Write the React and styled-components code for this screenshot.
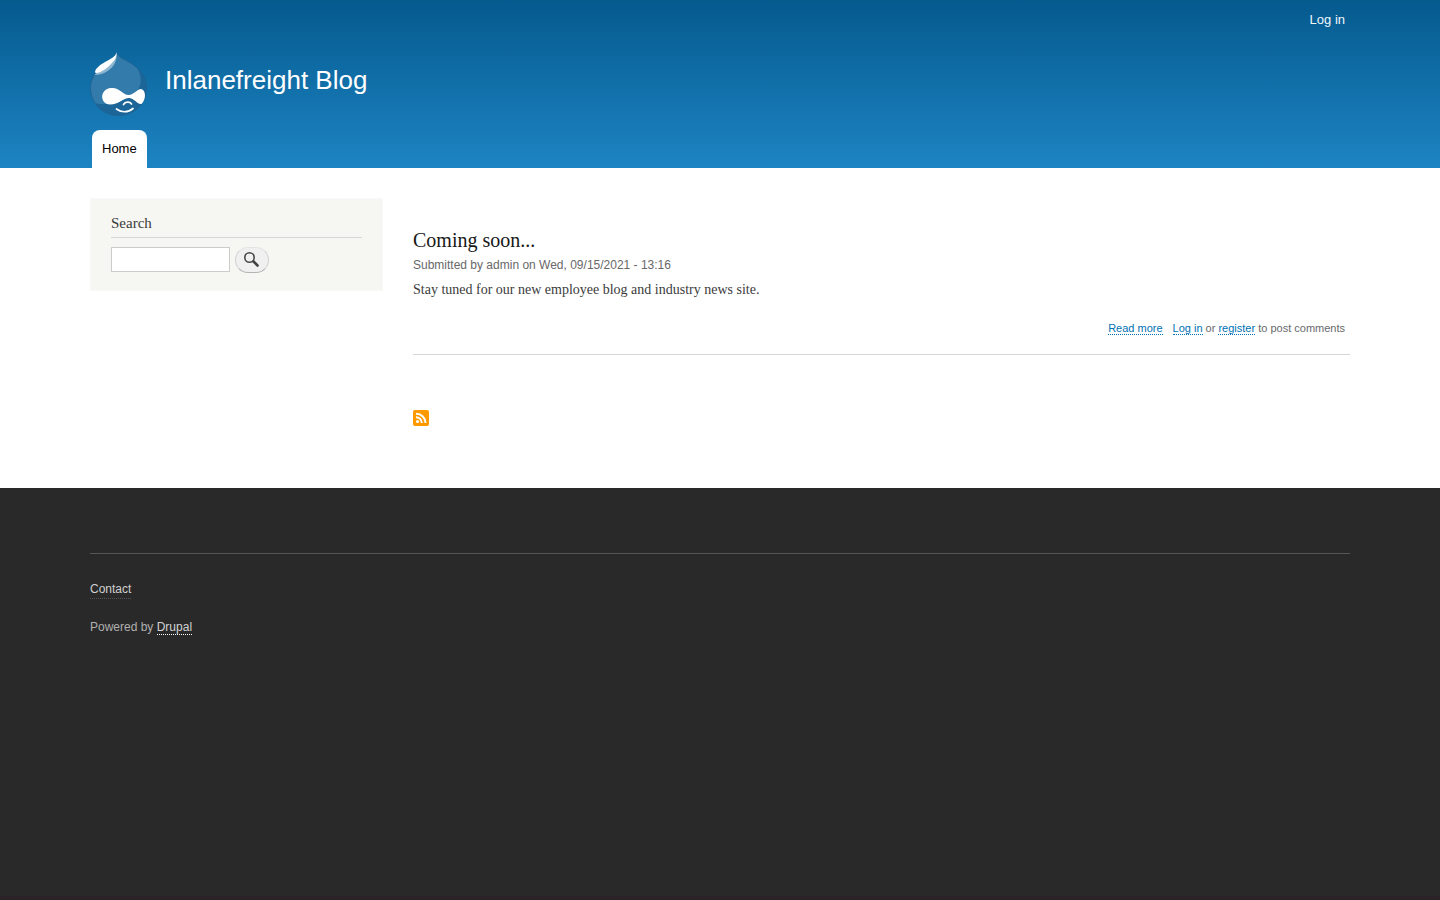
import React from "react";
import styled, { createGlobalStyle } from "styled-components";

const sans = `"Liberation Sans", Arial, Helvetica, sans-serif`;
const serif = `"Liberation Serif", Georgia, "Times New Roman", serif`;

const GlobalStyle = createGlobalStyle`
  *, *::before, *::after { box-sizing: border-box; }
  body { margin: 0; background: #292929; font-family: ${serif}; }
  h1, h2, p, ul { margin: 0; padding: 0; font-weight: normal; }
  a { text-decoration: none; }
`;

const Page = styled.div`
  display: flex;
  flex-direction: column;
  min-height: 100vh;
  border-bottom: 4px solid #2b2328;
`;

const Header = styled.header`
  padding: 0 90px;
  background: linear-gradient(to bottom, #055a8e 0%, #1d84c3 100%);
  font-family: ${sans};
`;

const UserMenu = styled.nav`
  display: flex;
  justify-content: flex-end;
  height: 52px;
  padding: 10px 5px 0;
  font-size: 13px;
  line-height: 20px;

  a { color: #f0f6fa; }
`;

const Branding = styled.div`
  display: flex;
  gap: 18px;
  height: 78px;
`;

const Logo = styled.svg`
  display: block;
  width: 57px;
  height: 65px;
`;

const SiteName = styled.h1`
  padding-top: 13px;
  font-size: 26px;
  line-height: 30px;

  a { color: #fffeff; }
`;

const MainMenu = styled.nav`
  display: flex;
  padding-left: 2px;
`;

const Tab = styled.a`
  height: 38px;
  padding: 0 10px;
  border-radius: 8px 8px 0 0;
  background: #fff;
  color: #000;
  font-size: 13px;
  line-height: 38px;
`;

const Main = styled.main`
  display: grid;
  grid-template-columns: 293px minmax(0, 1fr);
  align-items: start;
  gap: 30px;
  min-height: 320px;
  padding: 30px 90px 62px;
  background: #fff;
`;

const SearchBlock = styled.section`
  padding: 15px 20px 17px;
  border: 1px solid #f9f9f9;
  background: #f6f6f2;
`;

const BlockTitle = styled.h2`
  padding-bottom: 4px;
  border-bottom: 1px solid #d6d6d6;
  color: #3b3b3b;
  font-size: 15px;
  line-height: 19px;
`;

const SearchForm = styled.form`
  display: flex;
  align-items: flex-start;
  gap: 5px;
  padding-top: 9px;
`;

const SearchInput = styled.input`
  width: 119px;
  height: 25px;
  margin: 0;
  padding: 2px 4px;
  border: 1px solid #ccc;
  border-radius: 0;
  background: #fff;
  font: 13px ${sans};
`;

const SearchButton = styled.button`
  display: flex;
  align-items: center;
  justify-content: center;
  width: 34px;
  height: 26px;
  margin: 0;
  padding: 0;
  border: 1px solid #e4e4e4;
  border-right-color: #d2d2d2;
  border-bottom-color: #b4b4b4;
  border-left-color: #d2d2d2;
  border-radius: 13px;
  background: #f0f0f0;
  cursor: pointer;
`;

const Content = styled.div`
  padding-top: 29px;
`;

const Article = styled.article`
  padding-bottom: 18px;
  border-bottom: 1px solid #d3d7d9;
`;

const ArticleTitle = styled.h2`
  font-size: 20px;
  line-height: 26px;

  a { color: #181818; }
`;

const Submitted = styled.p`
  padding-top: 4px;
  color: #686868;
  font: 12px/16px ${sans};
`;

const Body = styled.p`
  padding-top: 6px;
  color: #3b3b3b;
  font-size: 14px;
  line-height: 21px;
`;

const Links = styled.ul`
  display: flex;
  justify-content: flex-end;
  gap: 10px;
  padding: 20px 5px 0;
  color: #68696b;
  font: 11px/16px ${sans};
  list-style: none;

  a {
    border-bottom: 1px dotted #0071b3;
    color: #0071b3;
  }
`;

const FeedLink = styled.a`
  display: block;
  width: 16px;
  height: 16px;
  margin-top: 55px;

  svg { display: block; }
`;

const Footer = styled.footer`
  padding: 65px 90px 0;
  color: #b0b0b0;
  font: 12px/16px ${sans};
`;

const FooterInner = styled.div`
  display: flex;
  flex-direction: column;
  align-items: flex-start;
  gap: 20px;
  padding-top: 27px;
  border-top: 1px solid #555;
`;

const FooterMenuLink = styled.a`
  padding-bottom: 1px;
  border-bottom: 1px dotted #555;
  color: #d0d0d0;
`;

const FooterLink = styled.a`
  border-bottom: 1px dotted #fcfcfc;
  color: #d4d4d4;
`;

const dropOutline =
  "M26.500 0C27.500 4 31 6 36 8.500C46 13.500 56.500 22 56.500 36C56.500 52 44 63.500 28.500 63.500C12.500 63.500 .5 51 .5 36C.5 27 5 21 10 16.500C16 12 26 8 26.500 0Z";

function DropLogo() {
  return (
    <Logo viewBox="0 0 57 65" aria-hidden="true">
      <defs>
        <clipPath id="drop">
          <path d={dropOutline} />
        </clipPath>
      </defs>
      <g clipPath="url(#drop)">
        <rect width="57" height="65" fill="#337bab" />
        <path d="M45 13C56 27 50 41 38 46C25 52 11 54 2 50L4 65H57V13Z" fill="#1b6598" />
      </g>
      <path d={dropOutline} fill="none" stroke="#1f618f" strokeWidth=".8" />
      <path d="M4.500 23C14 23 23 17 25.500 9.500L27 4C24 9 16 12 10 17Z" fill="#8fb7d2" />
      <path d="M26.500 0C27.500 5 24 9.500 19 14C14 19 7 22 5 20.500C5 16.500 10 13 15 10C20 7 26 5 26.500 0Z" fill="#fff" />
      <path d="M21 36C29 35 33 43 38.500 43C44 43 47 37 51 37C56.500 38 56 48 51.500 52C48 53 44 46 39 46C33 46 29 52.500 20 52.500C9.500 52 9.500 37 21 36Z" fill="#fff" />
      <path d="M33.500 52.500C35 49.500 40 49.500 41.500 52M26.500 57C31 60.500 38 61 43 56.500" fill="none" stroke="#fff" strokeWidth="1.700" strokeLinecap="round" />
    </Logo>
  );
}

function SearchIcon() {
  return (
    <svg width="16" height="16" viewBox="0 0 16 16" fill="none" aria-hidden="true">
      <circle cx="5.500" cy="5.500" r="4.700" stroke="#4a4a4a" strokeWidth="1.600" />
      <path d="M9.500 9.500L13.500 13.500" stroke="#424242" strokeWidth="2.600" strokeLinecap="round" />
    </svg>
  );
}

function FeedIcon() {
  return (
    <svg width="16" height="16" viewBox="0 0 16 16" fill="none" aria-hidden="true">
      <rect width="16" height="16" rx="2" fill="#ff9900" />
      <circle cx="4.500" cy="11.500" r="1.600" fill="#fff" />
      <path d="M3 7.200C6.200 7.200 8.800 9.800 8.800 13M3 3.800C8.500 3.800 12.500 8 12.500 13" stroke="#fff" strokeWidth="2" />
    </svg>
  );
}

export default function App() {
  return (
    <>
      <GlobalStyle />
      <Page>
        <Header>
          <UserMenu aria-label="User account menu">
            <a href="#login">Log in</a>
          </UserMenu>
          <Branding>
            <a href="#home" aria-label="Home"><DropLogo /></a>
            <SiteName><a href="#home">Inlanefreight Blog</a></SiteName>
          </Branding>
          <MainMenu aria-label="Main navigation">
            <Tab href="#home">Home</Tab>
          </MainMenu>
        </Header>
        <Main>
          <SearchBlock>
            <BlockTitle id="search-title">Search</BlockTitle>
            <SearchForm role="search">
              <SearchInput type="search" aria-labelledby="search-title" />
              <SearchButton type="button" aria-label="Search"><SearchIcon /></SearchButton>
            </SearchForm>
          </SearchBlock>
          <Content>
            <Article>
              <ArticleTitle><a href="#post">Coming soon...</a></ArticleTitle>
              <Submitted>Submitted by admin on Wed, 09/15/2021 - 13:16</Submitted>
              <Body>Stay tuned for our new employee blog and industry news site.</Body>
              <Links>
                <li><a href="#post">Read more</a></li>
                <li><a href="#login">Log in</a> or <a href="#register">register</a> to post comments</li>
              </Links>
            </Article>
            <FeedLink href="#feed" aria-label="Subscribe to feed"><FeedIcon /></FeedLink>
          </Content>
        </Main>
        <Footer>
          <FooterInner>
            <FooterMenuLink href="#contact">Contact</FooterMenuLink>
            <p>Powered by <FooterLink href="#drupal">Drupal</FooterLink></p>
          </FooterInner>
        </Footer>
      </Page>
    </>
  );
}
